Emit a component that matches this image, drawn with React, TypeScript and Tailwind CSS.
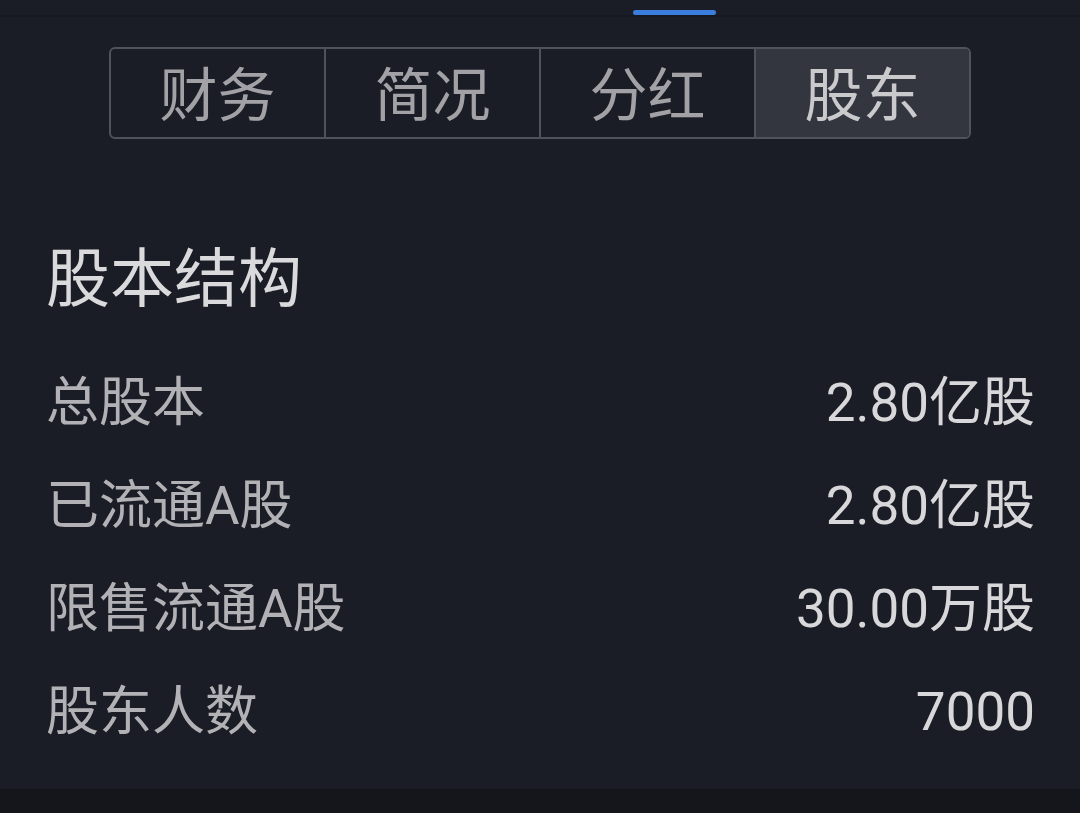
const tabs = ['财务', '简况', '分红', '股东'];

const rows = [
  { label: '总股本', value: '2.80亿股' },
  { label: '已流通A股', value: '2.80亿股' },
  { label: '限售流通A股', value: '30.00万股' },
  { label: '股东人数', value: '7000' },
];

export default function App() {
  return (
    <div
      className="w-[1080px] h-[813px] bg-[#1b1d26] flex flex-col overflow-hidden"
      style={{ fontFamily: 'Roboto, "Noto Sans CJK SC", sans-serif' }}
    >
      {/* top tab indicator */}
      <div className="h-[15px] flex items-end pl-[633px]">
        <div className="w-[83px] h-[5px] rounded-full bg-[#3b7ddd]" />
      </div>
      <div className="h-[2px] bg-[#16181f]" />

      {/* segmented tabs */}
      <div className="pt-[30px] px-[109px]">
        <div className="flex h-[92px] border-2 border-[#50525b] rounded-[6px] overflow-hidden">
          {tabs.map((t, i) => (
            <div
              key={t}
              className={
                'flex-1 flex items-center justify-center text-[58px] leading-none pt-[6px] ' +
                (i > 0 ? 'border-l-2 border-[#50525b] ' : '') +
                (i === tabs.length - 1 ? 'bg-[#33353f] text-[#cacacd]' : 'text-[#a2a2a6]')
              }
            >
              {t}
            </div>
          ))}
        </div>
      </div>

      {/* share structure */}
      <div className="flex-1 pl-[46px] pr-[45px] pt-[109px]">
        <h2 className="text-[64px] leading-none text-[#dadadc]">股本结构</h2>
        <div className="mt-[40px] flex flex-col">
          {rows.map((r) => (
            <div key={r.label} className="h-[103px] flex items-center justify-between">
              <span className="text-[53px] leading-none text-[#b2b2b6]">{r.label}</span>
              <span className="text-[53px] leading-none text-[#d8d8da]">{r.value}</span>
            </div>
          ))}
        </div>
      </div>

      <div className="h-[24px] bg-[#15161b]" />
    </div>
  );
}
